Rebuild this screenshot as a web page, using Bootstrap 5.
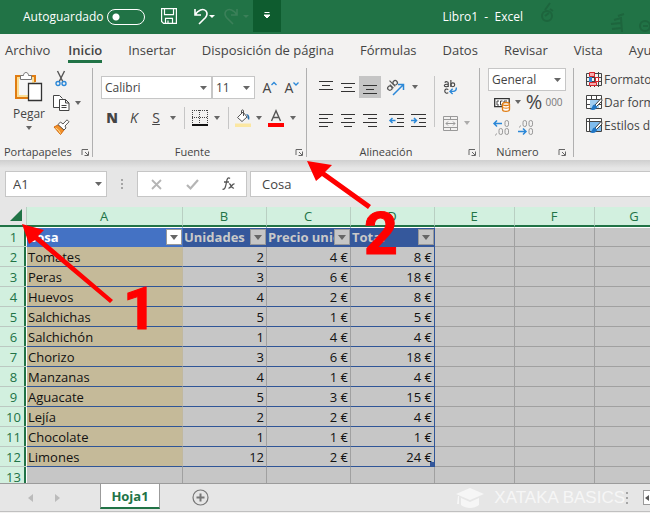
<!DOCTYPE html>
<html lang="es">
<head>
<meta charset="utf-8">
<meta name="viewport" content="width=device-width, initial-scale=1">
<title>Libro1 - Excel</title>
<link rel="stylesheet" href="https://cdn.jsdelivr.net/npm/bootstrap@5.3.0/dist/css/bootstrap.min.css">
<style>
:root{--green:#217346;--ink:#444;--line:#c6c6c6;--blue:#2b88d8}
body{font-family:"Open Sans","Noto Sans",sans-serif;font-size:12px;line-height:16px;color:var(--ink);background:#e6e6e6;height:100vh;overflow:hidden}
svg{display:block;flex:none;overflow:visible}
button{border:0;background:none;padding:0;color:inherit;display:inline-flex;align-items:center;justify-content:center;flex:none}
/* title bar */
.titlebar{background:var(--green);color:#fff;height:34px;padding-left:23px}
.titlebar .tool{width:16px;height:32px}
.autosave{appearance:none;width:38px;height:16px;border:1px solid #fff;border-radius:8px;margin:0 0 0 4px;background:radial-gradient(circle at 8px 7px,#fff 3px,transparent 4px)}
.tool-more{background:#0e5c2f;width:28px;height:32px}
.doc-title{padding-left:34px;white-space:pre}
/* ribbon tabs */
.tabs{background:#f3f2f1;height:32px;padding-left:5px;gap:26px;font-size:13px}
.tabs a{color:var(--ink);text-decoration:none;white-space:nowrap;line-height:20px;border-bottom:3px solid transparent;margin-top:6px}
.tabs a:first-child{margin-right:-8px}
.tabs a.current{font-weight:600;border-color:var(--green)}
/* ribbon */
.ribbon{background:#f3f2f1;padding-top:2px;height:94px}
.rgroup{height:92px;flex:none}
.rgroup + .rgroup{border-left:1px solid #bcbbba;border-image:linear-gradient(#b0b0b0 88px,transparent 88px) 1}
.g-clip{width:92px}.g-font{width:214px}.g-align{width:173px}.g-num{width:94px}.g-style{width:186px}
.gbody{height:76px}
.caption{height:16px;line-height:16px;font-size:11px}
.launcher{width:14px}
.b22{width:22px;height:22px}.b20{width:20px;height:22px}.b28{width:28px;height:22px}
.caret{width:12px;height:22px}
.caret::after{content:"";border:3px solid transparent;border-top:4px solid #666;border-bottom:0}
.vsep{width:10px;height:22px;background:linear-gradient(var(--line),var(--line)) center/1px 100% no-repeat}
.pressed{background:#c5c5c5}
.drop{appearance:none;border:1px solid var(--line);border-radius:0;height:23px;padding:0 3px;color:var(--ink);font-size:12px;background:#fff url("data:image/svg+xml,%3Csvg xmlns='http://www.w3.org/2000/svg' width='7' height='4'%3E%3Cpath d='M0 0h7L3.5 4z' fill='%23666'/%3E%3C/svg%3E") no-repeat right 4px center}
.w-face{width:111px}.w-size{width:43px}.w-num{width:78px}
.paste{width:42px;flex-direction:column;justify-content:flex-start}
.paste .caret{height:12px}
.clip-tools{gap:2px}
.strong-n{font-weight:800;font-size:14px}
.size14{font-size:14px}
.zeros{color:#777;font-size:10px}
.style-row{height:23px;gap:2px;white-space:nowrap}
/* formula bar */
.fbar{padding:11px 0 10px 5px;background:linear-gradient(#cfcfcf,#e6e6e6 8px)}
.fbox{background:#fff;border:1px solid var(--line);height:26px}
.namebox{width:102px;font-size:13px;padding:0 7px;background-color:#fff;border-radius:0;border:1px solid var(--line);height:26px}
.fdots{width:30px;gap:2px}
.fdots i,.bar-dots i{display:block;width:2px;height:2px;background:#a5a5a5}
.ftools{width:110px;margin-right:3px}
.finput{border:1px solid var(--line);border-right:0;height:26px;padding:0 11px;font-size:13px;color:var(--ink);min-width:0}
/* sheet */
.grid-area{background:#c6c6c6;overflow:hidden;min-height:0;border-bottom:1px solid #9b9b9b}
.sheet{table-layout:fixed;width:100%;min-width:675px;border-collapse:separate;border-spacing:0;color:#111;font-size:13px;line-height:18px}
.sheet th,.sheet td{height:20px;padding:0 2px 0 1px;border-right:1px solid #a0a0a0;border-bottom:1px solid #a0a0a0;white-space:nowrap;overflow:hidden}
.sheet thead th{background:#d2f0df;color:var(--green);font-weight:400;text-align:center;border-bottom:2px solid var(--green);border-right-color:#b9cfc2;line-height:17px}
.sheet thead th:first-child{background:#e6e6e6;border-right:1px solid #b9cfc2;padding:0 4px 2px 0}
.sheet tbody th{background:#d2f0df;color:var(--green);font-weight:400;text-align:center;border-right:0;border-bottom-color:#bcc9c2;padding:0;box-shadow:inset -1px 0 #fff,inset -3px 0 var(--green)}
.sheet tbody tr:first-child td{border-top:1px solid #fff;line-height:17px}
.sheet .rec td:nth-child(-n+5){border-bottom-color:#2f5597}
.sheet .rec td:nth-child(2){background:#c5ba99;border-right-color:#c0b89f}
.sheet .rec td:nth-child(n+3):nth-child(-n+5){text-align:right}
.sheet .rec td:nth-child(5),.sheet .heads td:nth-child(5){border-right-color:#2f5597}
.sheet .heads td:nth-child(-n+5){background:#35589c;color:#c9c9c9;font-weight:700;border-color:#35589c;padding:0}
.sheet .heads td:nth-child(2){background:#4472c4;color:#fff;border-color:#4472c4}
.sheet .heads td:nth-child(-n+5){border-top-color:#fff}
.hname{min-width:0;overflow:hidden;padding-left:1px}
.filter{width:16px;height:16px;background:#c6c6c6;border:1px solid #999}
.filter::after{content:"";border:4px solid transparent;border-top:5px solid #666;border-bottom:0}
.heads td:nth-child(2) .filter{background:#fff}
.cw-n{width:27px}.cw-a{width:156px}.cw-b{width:84px}.cw-e{width:80px}
.last-cell{background:linear-gradient(#35589c,#35589c) right bottom/4px 4px no-repeat}
/* sheet tabs */
.sheetbar{height:28px;border-bottom:1px solid #c0c0c0;padding-left:20px}
.navs{width:80px;gap:22px}
.sheet-tab{width:60px;height:25px;background:#fff;border:1px solid #9b9b9b;border-top:0;border-bottom:2px solid var(--green);color:var(--green);font-weight:700;font-size:13px;text-decoration:none;text-align:center;line-height:24px}
.brandmark{color:#f6f6f6;font:17px/20px "Liberation Sans",Arial,sans-serif;gap:10px;white-space:nowrap}
.bar-dots{gap:3px;width:2px;margin:0 15px 0 1px}
.hscroll{width:7px;height:15px;background:#fff;border:1px solid #9b9b9b;border-right:0}
.status{height:1px;background:#f3f2f1}
/* callouts drawn over the sheet */
.notes{position:absolute;left:0;top:0;pointer-events:none}
.notes text{font:700 59px Roboto,"Liberation Sans",sans-serif;fill:#f00;stroke:#f00;stroke-width:1px;text-anchor:middle}
</style>
<script src="https://cdn.jsdelivr.net/npm/bootstrap@5.3.0/dist/js/bootstrap.bundle.min.js"></script>
</head>
<body class="d-flex flex-column position-relative">

<header class="titlebar d-flex flex-shrink-0">
  <div class="d-flex align-items-center flex-shrink-0">
    <label for="auto">Autoguardado</label>
    <input id="auto" class="autosave" type="checkbox" role="switch">
  </div>
  <div class="d-flex flex-shrink-0 ps-3">
    <button class="tool" aria-label="Guardar"><svg width="16" height="16" viewBox="0 0 16 16" fill="none" stroke="#fff" stroke-width="1.2"><path d="M.6.6h14.8v14.8H2.6l-2-2zM3.5.6v6h9v-6M4.500 15.400v-5h7v5M7 15v-2.500"/></svg></button>
    <button class="tool ms-3" aria-label="Deshacer"><svg width="14" height="17" viewBox="0 0 14 17" fill="none" stroke="#fff" stroke-width="1.600"><path d="M1 1v6h6M1 7C4 2 9 0 12 3c2 2.500 1 4.500-.5 6.500L5 16"/></svg></button>
    <svg width="6" height="32"><path d="M0 15h6l-3 3z" fill="#fff"/></svg>
    <button class="tool ms-2 me-1" aria-label="Rehacer"><svg width="14" height="17" viewBox="0 0 14 17" fill="none" stroke="#3b8059" stroke-width="1.600"><path d="M13 1v6H7M13 7C10 2 5 0 2 3 0 5.500 1 7.500 2.500 9.500L9 16"/></svg></button>
    <svg class="me-1" width="6" height="32"><path d="M0 15h6l-3 3z" fill="#3b8059"/></svg>
    <button class="tool-more" aria-label="Personalizar"><svg width="6" height="8"><path d="M.5.5h5M0 3h6L3 6z" stroke="#fff" stroke-width="1" fill="#fff"/></svg></button>
  </div>
  <div class="doc-title flex-fill d-flex align-items-center justify-content-center">Libro1  -  Excel</div>
  <svg class="position-absolute end-0" width="112" height="34" fill="none" stroke="#1d653d" stroke-width="2"><circle cx="9" cy="16" r="5"/><path d="M7 10l5-7M7 16l4-3M12 9l3 2M76 20l7-2 1 14M73 24l10-1M74 29l10-1M80 16l6-2"/><circle cx="107" cy="26" r="5"/><path d="M105 26h5"/></svg>
</header>

<nav class="tabs d-flex align-items-start flex-shrink-0 overflow-hidden" aria-label="Cinta">
  <a href="#">Archivo</a><a href="#" class="current">Inicio</a><a href="#">Insertar</a><a href="#">Disposición de página</a><a href="#">Fórmulas</a><a href="#">Datos</a><a href="#">Revisar</a><a href="#">Vista</a><a href="#">Ayuda</a>
</nav>

<section class="ribbon d-flex flex-shrink-0 overflow-hidden">
  <div class="rgroup g-clip">
    <div class="gbody d-flex ps-2">
      <button class="paste d-flex pt-1"><svg class="mb-1" width="28" height="30" viewBox="0 0 28 30"><path d="M2 5h18v6h-6v14H2z" fill="#fcdf95"/><path d="M7 4H1v22h12M15 4h5v6" fill="none" stroke="#e07c12" stroke-width="2"/><path d="M4 7h13v4h-4v12H4z" fill="#f7f7f7"/><path d="M5.500 7.500v-4h3c0-4 5-4 5 0h3v4z" fill="#fff" stroke="#777"/><path d="M13.500 11.500h13v17h-13z" fill="#fff" stroke="#333" stroke-width="1.300"/></svg><span>Pegar</span><span class="caret d-flex align-items-center justify-content-center"></span></button>
      <div class="clip-tools d-flex flex-column align-items-start">
        <button aria-label="Cortar" class="b22"><svg width="12" height="16" viewBox="0 0 12 16" fill="none"><path d="M2.500 0l5.500 11M9.500 0L4 11" stroke="#555" stroke-width="1.400"/><circle cx="3" cy="12.500" r="2" stroke="#2b88d8" stroke-width="1.400"/><circle cx="9" cy="12.500" r="2" stroke="#2b88d8" stroke-width="1.400"/></svg></button>
        <div class="d-flex"><button aria-label="Copiar" class="b22"><svg width="17" height="16" viewBox="0 0 17 16" fill="#fff" stroke="#444"><path d="M6 12.500H.5V.5h6l3 3"/><path d="M6.500 4.500h6l3.500 3.500v7.500H6.500zM12.500 4.500V8H16M8.500 10.500h5M8.500 12.500h5"/></svg></button><button class="caret" aria-label="Opciones de copiar"></button></div>
        <button aria-label="Copiar formato" class="b22"><svg width="17" height="16" viewBox="0 0 17 16"><path d="M1 8l4-2 6 5-3.500 4.500z" fill="#f2902a" stroke="#d5690b"/><path d="M2.500 9l3 2 2 3.500" stroke="#fcdf95" fill="none"/><path d="M5 5.500l2.500-2.500 2.500 2L14 .8l2 2L12 7l1 2-2 2z" fill="#fff" stroke="#555"/></svg></button>
      </div>
    </div>
    <div class="caption d-flex ps-1"><span class="flex-fill">Portapapeles</span><button class="launcher" aria-label="Más opciones de portapapeles"><svg width="7" height="7" fill="none" stroke="#666"><path d="M0 6V.5h6M3 3l3 3M6.500 2.500v4h-4"/></svg></button></div>
  </div>

  <div class="rgroup g-font">
    <div class="gbody d-flex flex-column ps-2 pt-2">
      <div class="d-flex align-items-center">
        <select class="drop w-face" aria-label="Fuente"><option>Calibri</option></select><select class="drop w-size" aria-label="Tamaño"><option>11</option></select>
        <button class="b22 ms-1 size14" aria-label="Aumentar"><span>A</span><svg class="mb-2" width="6" height="4" fill="none" stroke="#2b88d8" stroke-width="1.300"><path d="M.5 3L3 .5 5.500 3"/></svg></button>
        <button class="b22 size14" aria-label="Reducir"><span>A</span><svg class="mb-2" width="6" height="4" fill="none" stroke="#2b88d8" stroke-width="1.300"><path d="M.5.5L3 3 5.500.5"/></svg></button>
      </div>
      <div class="d-flex align-items-center mt-2">
        <button class="b22 strong-n">N</button><button class="b22 size14 fst-italic">K</button><button class="b22 size14 text-decoration-underline">S</button><button class="caret" aria-label="Subrayado"></button>
        <span class="vsep"></span>
        <button class="b22" aria-label="Bordes"><svg width="16" height="16" fill="none" stroke="#444"><path d="M0 .5h16M0 7.500h16M.5 0v14M7.500 0v14M15.500 0v14" stroke-dasharray="1 1"/><path d="M0 15h16" stroke="#111" stroke-width="2"/></svg></button><button class="caret" aria-label="Opciones de bordes"></button>
        <span class="vsep"></span>
        <button class="b20" aria-label="Relleno"><svg width="16" height="17" viewBox="0 0 16 17"><path d="M0 13.500h16V17H0z" fill="#fbe7a2"/><path d="M2.500 7.500L8 2l4 5-5 4.500zM8.500 6V1c0-1.500-2-1.500-2 0v2" fill="#fff" stroke="#555"/><path d="M11 4c3 0 4 3 3 6-1-1-2-2-1.500-4z" fill="#2b6ea8"/></svg></button><button class="caret" aria-label="Color de relleno"></button>
        <button class="b22" aria-label="Color de fuente"><svg width="16" height="17"><path d="M3.500 11L8 .8 12.500 11M5 7.500h6" fill="none" stroke="#555" stroke-width="1.400"/><path d="M0 13h16v4H0z" fill="#f00"/></svg></button><button class="caret" aria-label="Opciones de color"></button>
      </div>
    </div>
    <div class="caption d-flex"><span class="flex-fill text-center">Fuente</span><button class="launcher" aria-label="Más opciones de fuente"><svg width="7" height="7" fill="none" stroke="#666"><path d="M0 6V.5h6M3 3l3 3M6.500 2.500v4h-4"/></svg></button></div>
  </div>

  <div class="rgroup g-align">
    <div class="gbody d-flex ps-2 pt-2">
      <div>
        <div class="d-flex">
          <button class="b22" aria-label="Alinear arriba"><svg width="14" height="14" stroke="#333"><path d="M0 1.500h14M3 5.500h8M0 9.500h14"/></svg></button>
          <button class="b22" aria-label="Alinear al medio"><svg width="14" height="14" stroke="#333"><path d="M0 3.500h14M3 7.500h8M0 11.500h14"/></svg></button>
          <button class="b22 pressed" aria-label="Alinear abajo"><svg width="14" height="14" stroke="#333"><path d="M0 5.500h14M3 9.500h8M0 13.500h14"/></svg></button>
          <button class="b28" aria-label="Orientación"><svg width="17" height="17" viewBox="0 0 17 17" fill="none"><g stroke="#555" stroke-width="1.200" transform="rotate(-45 5 7)"><circle cx="2" cy="7" r="2.200"/><path d="M4.500 4.500v5M7 1.500v8"/><circle cx="9.500" cy="7" r="2.200"/></g><path d="M6 16L16 6M11 5.500h5.500V11" stroke="#2b88d8" stroke-width="1.500"/></svg></button><button class="caret" aria-label="Opciones de orientación"></button>
        </div>
        <div class="d-flex mt-2 pt-1">
          <button class="b22" aria-label="Izquierda"><svg width="14" height="14" stroke="#333"><path d="M0 .5h14M0 4.500h9M0 8.500h14M0 12.500h9"/></svg></button>
          <button class="b22" aria-label="Centrar"><svg width="14" height="14" stroke="#333"><path d="M0 .5h14M3 4.500h8M0 8.500h14M3 12.500h8"/></svg></button>
          <button class="b22 me-1" aria-label="Derecha"><svg width="14" height="14" stroke="#333"><path d="M0 .5h14M5 4.500h9M0 8.500h14M5 12.500h9"/></svg></button>
          <button class="b22" aria-label="Disminuir sangría"><svg width="15" height="14" fill="none" stroke="#333"><path d="M0 .5h15M8 4.500h7M8 8.500h7M0 12.500h15"/><path d="M6.500 6.500H1M3.500 4L1 6.500 3.500 9" stroke="#2b88d8" stroke-width="1.500"/></svg></button>
          <button class="b22" aria-label="Aumentar sangría"><svg width="15" height="14" fill="none" stroke="#333"><path d="M0 .5h15M8 4.500h7M8 8.500h7M0 12.500h15"/><path d="M0 6.500h5.500M3 4l2.500 2.500L3 9" stroke="#2b88d8" stroke-width="1.500"/></svg></button>
        </div>
      </div>
      <span class="vsep h-75"></span>
      <div>
        <button class="b22" aria-label="Ajustar texto"><svg width="14" height="18" viewBox="0 0 16 18" fill="none" stroke="#444" stroke-width="1.300"><path d="M2 4c1-1.500 4-1.500 4 .5V9M6 6C3 5.500 1.500 6.500 1.500 7.500S5 9.500 6 7.500M9 1v8"/><circle cx="11.200" cy="6.500" r="2.200"/><path d="M6 12c-1.500-1.500-4-.5-4 1.500S4.500 17 6 15.500"/><path d="M15 9.500c1 2.500-1 4.500-3.500 4.500H8M11 11l-3 3 3 3" stroke="#2b88d8" stroke-width="1.600"/></svg></button>
        <div class="d-flex mt-2 pt-1"><button class="b22" aria-label="Combinar"><svg width="15" height="15" fill="none" stroke="#999"><path d="M.5.5h14v14H.5zM.5 3.500h14M.5 11.500h14M7.500 0v3M7.500 12v3M3 7.500h9M5 5.500l-2 2 2 2M10 5.500l2 2-2 2"/></svg></button><button class="caret opacity-50" aria-label="Opciones de combinar"></button></div>
      </div>
    </div>
    <div class="caption d-flex"><span class="flex-fill text-center">Alineación</span><button class="launcher" aria-label="Más opciones de alineación"><svg width="7" height="7" fill="none" stroke="#666"><path d="M0 6V.5h6M3 3l3 3M6.500 2.500v4h-4"/></svg></button></div>
  </div>

  <div class="rgroup g-num">
    <div class="gbody ps-2">
      <select class="drop w-num d-block" aria-label="Formato de número"><option>General</option></select>
      <div class="d-flex align-items-center px-1">
        <button class="b20" aria-label="Moneda"><svg class="mt-1" width="17" height="15" viewBox="0 0 17 15"><path d="M.7 1.700h14.500v8H.7z" fill="#fff" stroke="#333" stroke-width="1.300"/><path d="M5 4H3v4h2M8.500 4h-2v4h2M10 8V4h3" fill="none" stroke="#444"/><path d="M8.500 7v5.500c0 2.500 7 2.500 7 0V7" fill="#fff" stroke="#e07c12" stroke-width="1.300"/><ellipse cx="12" cy="7" rx="3.500" ry="1.500" fill="#fff" stroke="#e07c12" stroke-width="1.300"/><path d="M8.500 9.700c0 2 7 2 7 0" fill="none" stroke="#e07c12"/></svg></button><button class="caret" aria-label="Opciones de moneda"></button>
        <button class="b20 fs-5">%</button>
        <button class="b20 zeros">000</button>
      </div>
      <div class="d-flex px-1 mt-1 gap-1">
        <button class="b20" aria-label="Aumentar decimales"><svg width="16" height="16" fill="none" stroke="#999"><path d="M8 3.500H0M3 .5l-3 3 3 3" stroke="#2b88d8" stroke-width="1.500"/><rect x="11" y=".5" width="3.500" height="6" rx="1.700"/><rect x="5" y="8.500" width="3.500" height="6" rx="1.700"/><rect x="11" y="8.500" width="3.500" height="6" rx="1.700"/><path d="M2.500 13.500l-1 2"/></svg></button>
        <button class="b20" aria-label="Disminuir decimales"><svg width="16" height="16" fill="none" stroke="#999"><rect x="5" y=".5" width="3.500" height="6" rx="1.700"/><rect x="11" y=".5" width="3.500" height="6" rx="1.700"/><path d="M2.500 5.500l-1 2"/><path d="M0 11.500h8M5 8.500l3 3-3 3" stroke="#2b88d8" stroke-width="1.500"/><rect x="11" y="8.500" width="3.500" height="6" rx="1.700"/></svg></button>
      </div>
    </div>
    <div class="caption d-flex"><span class="flex-fill text-center">Número</span><button class="launcher me-1" aria-label="Más opciones de número"><svg width="7" height="7" fill="none" stroke="#666"><path d="M0 6V.5h6M3 3l3 3M6.500 2.500v4h-4"/></svg></button></div>
  </div>

  <div class="rgroup g-style">
    <div class="gbody d-flex flex-column align-items-start ps-2 ms-1">
      <button class="style-row"><svg width="16" height="15" fill="none" stroke="#444"><path d="M.5 1.500h15v12H.5zM.5 5.500h15M.5 9.500h15M4.500 0v15M8.500 0v15M12.500 0v15"/><path d="M3.500.5h5v4h-5zM3.500 10.500h7v3h-7z" fill="#f6a9ad" stroke="#d8232a"/><path d="M3 5h3v5H3z" fill="#2b88d8" stroke="none"/><path d="M9.500 5.500h3v4h-3z" fill="#fff" stroke="#d8232a"/></svg>Formato condicional</button>
      <button class="style-row"><svg width="16" height="15"><path d="M.5.5h15v13H.5zM.5 4.500h15M.5 9.500h15M5.500 0v13M10.500 0v13" fill="#fff" stroke="#444"/><path d="M4 5h9v8H4z" fill="#9fcdf2"/><path d="M15.500 3L9 10l1.500 1.500L16 6z" fill="#fff" stroke="#444"/><path d="M9 9.500c-3 0-2 3-5 5 4 1 7 0 7-3z" fill="#2176c4"/></svg>Dar formato como tabla</button>
      <button class="style-row"><svg width="16" height="15"><path d="M.5.5h15v13H.5zM.5 3.500h15M3.500 0v13" fill="#fff" stroke="#444"/><path d="M4 4h11v9H4z" fill="#7fbcee"/><path d="M15.500 3L9 10l1.500 1.500L16 6z" fill="#fff" stroke="#444"/><path d="M9 9.500c-3 0-2 3-5 5 4 1 7 0 7-3z" fill="#2176c4"/></svg>Estilos de celda</button>
    </div>
    <div class="caption text-center">Estilos</div>
  </div>
</section>

<section class="fbar d-flex flex-shrink-0 align-items-center">
  <select class="drop namebox flex-shrink-0" aria-label="Cuadro de nombres"><option>A1</option></select>
  <span class="fdots d-flex flex-column align-items-center"><i></i><i></i><i></i></span>
  <div class="fbox ftools d-flex align-items-center justify-content-around flex-shrink-0">
    <button class="b22" aria-label="Cancelar"><svg width="11" height="11" stroke="#b5b5b5" stroke-width="1.800"><path d="M1 1l9 9M10 1l-9 9"/></svg></button>
    <button class="b22" aria-label="Introducir"><svg width="13" height="11" fill="none" stroke="#b5b5b5" stroke-width="2.200"><path d="M1 6l3.500 3.500L12 1"/></svg></button>
    <button class="b22" aria-label="Insertar función"><svg width="13" height="14" fill="none" stroke="#555" stroke-width="1.300"><path d="M8 1.500C6-.5 5 2 4.500 5S3 13.500.5 12M2 5h5M7 7c2-1 2 5 5 4M12.500 7C10 6.500 9 11.500 6.500 11"/></svg></button>
  </div>
  <input class="finput flex-fill" aria-label="Barra de fórmulas" value="Cosa">
</section>

<main class="grid-area flex-fill">
  <table class="sheet">
    <colgroup><col class="cw-n"><col class="cw-a"><col class="cw-b"><col class="cw-b"><col class="cw-b"><col class="cw-e"><col class="cw-e"><col></colgroup>
    <thead><tr><th><svg class="ms-auto" width="12" height="12"><path d="M12 0v12H0z" fill="#217346"/></svg></th><th>A</th><th>B</th><th>C</th><th>D</th><th>E</th><th>F</th><th>G</th></tr></thead>
    <tbody>
      <tr class="heads"><th>1</th>
        <td><div class="d-flex align-items-center"><span class="hname flex-fill">Cosa</span><button class="filter" aria-label="Filtrar Cosa"></button></div></td>
        <td><div class="d-flex align-items-center"><span class="hname flex-fill">Unidades</span><button class="filter" aria-label="Filtrar Unidades"></button></div></td>
        <td><div class="d-flex align-items-center"><span class="hname flex-fill">Precio unidad</span><button class="filter" aria-label="Filtrar Precio"></button></div></td>
        <td><div class="d-flex align-items-center"><span class="hname flex-fill">Total</span><button class="filter" aria-label="Filtrar Total"></button></div></td>
        <td></td><td></td><td></td></tr>
      <tr class="rec"><th>2</th><td>Tomates</td><td>2</td><td>4 €</td><td>8 €</td><td></td><td></td><td></td></tr>
      <tr class="rec"><th>3</th><td>Peras</td><td>3</td><td>6 €</td><td>18 €</td><td></td><td></td><td></td></tr>
      <tr class="rec"><th>4</th><td>Huevos</td><td>4</td><td>2 €</td><td>8 €</td><td></td><td></td><td></td></tr>
      <tr class="rec"><th>5</th><td>Salchichas</td><td>5</td><td>1 €</td><td>5 €</td><td></td><td></td><td></td></tr>
      <tr class="rec"><th>6</th><td>Salchichón</td><td>1</td><td>4 €</td><td>4 €</td><td></td><td></td><td></td></tr>
      <tr class="rec"><th>7</th><td>Chorizo</td><td>3</td><td>6 €</td><td>18 €</td><td></td><td></td><td></td></tr>
      <tr class="rec"><th>8</th><td>Manzanas</td><td>4</td><td>1 €</td><td>4 €</td><td></td><td></td><td></td></tr>
      <tr class="rec"><th>9</th><td>Aguacate</td><td>5</td><td>3 €</td><td>15 €</td><td></td><td></td><td></td></tr>
      <tr class="rec"><th>10</th><td>Lejía</td><td>2</td><td>2 €</td><td>4 €</td><td></td><td></td><td></td></tr>
      <tr class="rec"><th>11</th><td>Chocolate</td><td>1</td><td>1 €</td><td>1 €</td><td></td><td></td><td></td></tr>
      <tr class="rec"><th>12</th><td>Limones</td><td>12</td><td>2 €</td><td class="last-cell">24 €</td><td></td><td></td><td></td></tr>
      <tr><th>13</th><td></td><td></td><td></td><td></td><td></td><td></td><td></td></tr>
    </tbody>
  </table>
</main>

<footer class="flex-shrink-0">
  <div class="sheetbar d-flex">
    <div class="navs d-flex align-items-center ps-2">
      <button aria-label="Hoja anterior"><svg width="5" height="8"><path d="M5 0v8L0 4z" fill="#bbb"/></svg></button>
      <button aria-label="Hoja siguiente"><svg width="5" height="8"><path d="M0 0v8l5-4z" fill="#bbb"/></svg></button>
    </div>
    <a href="#" class="sheet-tab">Hoja1</a>
    <button class="ms-4 ps-2" aria-label="Hoja nueva"><svg width="17" height="17" fill="none" stroke="#777"><circle cx="8.500" cy="8.500" r="7.500" stroke-width="1.200"/><path d="M8.500 4.500v8M4.500 8.500h8" stroke-width="2"/></svg></button>
    <div class="brandmark d-flex align-items-center ms-auto"><svg width="28" height="20" fill="#f6f6f6"><path d="M14 0l14 6-14 6L0 6zM5 10l9 4 9-4v7c-5 4-13 4-18 0zM2 8h1v8H1z"/></svg>XATAKA BASICS</div>
    <span class="bar-dots d-flex flex-column justify-content-center"><i></i><i></i><i></i></span>
    <button class="hscroll align-self-center" aria-label="Desplazar a la izquierda"><svg width="4" height="6"><path d="M4 0v6L0 3z" fill="#555"/></svg></button>
  </div>
  <div class="status"></div>
</footer>

<svg class="notes" width="420" height="340" aria-label="Indicaciones 1 y 2">
  <path d="M22 224L44 230 38 236 113 300 110 303 35 240 29 244z" fill="#f00"/>
  <path d="M307 161L332 165 325 172 371 205 368 209 322 176 316 181z" fill="#f00"/>
  <text x="140" y="329">1</text><text x="381" y="254">2</text>
</svg>
</body>
</html>
